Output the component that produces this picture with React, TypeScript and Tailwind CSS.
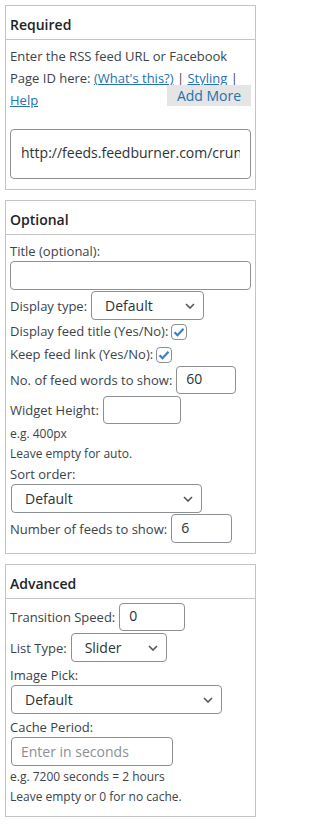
import React from "react";

const font = { fontFamily: '"Open Sans", "Noto Sans", sans-serif' };

const Chevron: React.FC = () => (
    <svg width="10" height="6" viewBox="0 0 10 6" className="shrink-0">
        <path d="M1 1l4 4 4-4" fill="none" stroke="#50575e" strokeWidth="1.6" />
    </svg>
);

const Select: React.FC<{ value: string; className: string }> = ({ value, className }) => (
    <div
        className={`flex items-center justify-between rounded-[4px] border border-[#8c8f94] bg-white pl-[13px] pr-[8px] text-[14px] text-[#2c3338] ${className}`}
    >
        <span>{value}</span>
        <Chevron />
    </div>
);

const TextBox: React.FC<{ value?: string; placeholder?: string; className: string }> = ({
    value,
    placeholder,
    className,
}) => (
    <input
        type="text"
        readOnly
        defaultValue={value}
        placeholder={placeholder}
        className={`block rounded-[4px] border border-[#8c8f94] bg-white px-[9px] pb-[3px] text-[14px] text-[#2c3338] outline-none placeholder:text-[#8c8f94] ${className}`}
        style={font}
    />
);

const Check: React.FC = () => (
    <span className="ml-[3px] inline-flex h-[16px] w-[16px] items-center justify-center rounded-[4px] border border-[#8c8f94] bg-white">
        <svg width="12" height="10" viewBox="0 0 12 10">
            <path d="M1.5 5.2l3 3L10.5 1.8" fill="none" stroke="#3582c4" strokeWidth="2.2" />
        </svg>
    </span>
);

const Box: React.FC<{ title: string; children: React.ReactNode; className?: string }> = ({
    title,
    children,
    className,
}) => (
    <div className={`w-[251px] border border-[#c3c4c7] bg-white ${className ?? ""}`}>
        <div className="flex h-[34px] items-center border-b border-[#c3c4c7] pl-[4px] pt-[4px] text-[14px] font-semibold text-[#1d2327]">
            {title}
        </div>
        {children}
    </div>
);

export default function App() {
    return (
        <div className="min-h-[825px] w-[262px] bg-white pl-[5px] pt-[5px] text-[13px] text-[#3c434a]" style={font}>
            <Box title="Required">
                <div className="px-[4px] pb-[10px] pt-[5px]">
                    <div className="leading-[22px]">Enter the RSS feed URL or Facebook</div>
                    <div className="leading-[22px]">
                        Page ID here: <a className="text-[#2271b1] underline">(What's this?)</a> |{" "}
                        <a className="text-[#2271b1] underline">Styling</a> |
                    </div>
                    <div className="flex h-[22px] items-start justify-between">
                        <a className="text-[#2271b1] underline leading-[22px]">Help</a>
                        <span className="-mt-[4px] flex h-[21px] w-[84px] items-center justify-center bg-[#e5e5e5] text-[14px] text-[#2271b1]">
                            Add More
                        </span>
                    </div>
                    <TextBox
                        value="http://feeds.feedburner.com/crunchgear"
                        className="mt-[18px] h-[50px] w-[241px] !px-[10px]"
                    />
                </div>
            </Box>

            <Box title="Optional" className="mt-[10px]">
                <div className="px-[4px] pb-[10px] pt-[6px]">
                    <div className="leading-[20px]">Title (optional):</div>
                    <TextBox className="h-[29px] w-[241px]" />
                    <div className="mt-[1px] flex items-center gap-[4px]">
                        <span className="mt-[2px]">Display type:</span>
                        <Select value="Default" className="h-[29px] w-[113px]" />
                    </div>
                    <div className="flex h-[23px] items-center">
                        Display feed title (Yes/No): <Check />
                    </div>
                    <div className="flex h-[23px] items-center">
                        Keep feed link (Yes/No): <Check />
                    </div>
                    <div className="flex items-center gap-[4px]">
                        <span className="mt-[2px]">No. of feed words to show:</span>
                        <TextBox value="60" className="h-[28px] w-[60px]" />
                    </div>
                    <div className="mt-[2px] flex items-center gap-[4px]">
                        <span className="mt-[2px]">Widget Height:</span>
                        <TextBox className="h-[28px] w-[78px]" />
                    </div>
                    <div className="text-[12px] leading-[20px]">e.g. 400px</div>
                    <div className="text-[12px] leading-[20px]">Leave empty for auto.</div>
                    <div className="leading-[20px]">Sort order:</div>
                    <Select value="Default" className="ml-px h-[29px] w-[191px]" />
                    <div className="mt-px flex items-center gap-[4px]">
                        <span className="mt-[2px]">Number of feeds to show:</span>
                        <TextBox value="6" className="h-[29px] w-[61px]" />
                    </div>
                </div>
            </Box>

            <Box title="Advanced" className="mt-[10px]">
                <div className="px-[4px] pb-[9px] pt-[4px]">
                    <div className="flex items-center gap-[4px]">
                        <span className="mt-[2px]">Transition Speed:</span>
                        <TextBox value="0" className="h-[28px] w-[66px]" />
                    </div>
                    <div className="mt-[2px] flex items-center gap-[4px]">
                        <span className="mt-[2px]">List Type:</span>
                        <Select value="Slider" className="h-[29px] w-[96px]" />
                    </div>
                    <div className="mt-[3px] leading-[20px]">Image Pick:</div>
                    <Select value="Default" className="ml-px h-[29px] w-[211px]" />
                    <div className="mt-[3px] leading-[20px]">Cache Period:</div>
                    <TextBox placeholder="Enter in seconds" className="ml-px h-[29px] w-[162px] !pb-0" />
                    <div className="mt-px text-[12px] leading-[20px]">e.g. 7200 seconds = 2 hours</div>
                    <div className="text-[12px] leading-[20px]">Leave empty or 0 for no cache.</div>
                </div>
            </Box>
        </div>
    );
}
